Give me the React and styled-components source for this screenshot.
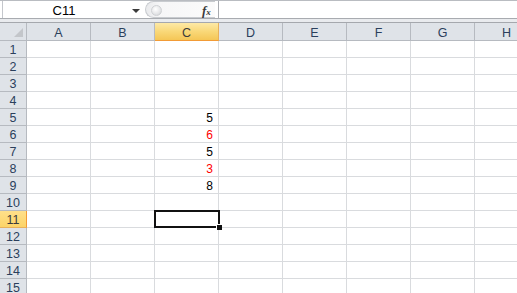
import React from "react";
import styled, { createGlobalStyle, css } from "styled-components";

const Global = createGlobalStyle`
  html, body { margin: 0; padding: 0; background: #ffffff; overflow: hidden; }
  body { font-family: "Liberation Sans", Arial, sans-serif; }
`;

const Window = styled.div`
  width: 517px;
  height: 293px;
  overflow: hidden;
  display: flex;
  flex-direction: column;
  background: #fff;
`;

const FormulaBar = styled.div`
  height: 19px;
  flex-shrink: 0;
  box-sizing: border-box;
  border-top: 1px solid #b9bcc1;
  border-bottom: 1px solid #a8abb0;
  display: flex;
  align-items: stretch;
  background: #fff;
`;

const NameBox = styled.div`
  margin-left: 2px;
  width: 141px;
  border-left: 1px solid #c4c7cc;
  display: flex;
  align-items: center;
  position: relative;
  font-size: 13px;
  color: #000;
`;

const NameText = styled.span`
  width: 122px;
  text-align: center;
  padding-top: 2px;
`;

const Arrow = styled.span`
  position: absolute;
  left: 129px;
  top: 8px;
  width: 0;
  height: 0;
  border-left: 4px solid transparent;
  border-right: 4px solid transparent;
  border-top: 4px solid #3b3b3b;
`;

const FxArea = styled.div`
  width: 74px;
  display: flex;
  align-items: center;
  position: relative;
`;

const Grip = styled.div`
  position: absolute;
  left: 1px;
  top: 0px;
  width: 70px;
  height: 17px;
  box-sizing: border-box;
  border-radius: 9px 0 0 9px;
  border: 1px solid #c8cbcf;
  border-right: none;
  background: linear-gradient(to right, #e9eaec 0%, #f6f6f7 20%, #fbfbfb 100%);
`;

const GripDot = styled.div`
  position: absolute;
  left: 5px;
  top: 3px;
  width: 9px;
  height: 9px;
  border-radius: 50%;
  background: radial-gradient(circle at 40% 35%, #ffffff 0%, #e4e5e7 60%, #c9cbce 100%);
  border: 1px solid #cfd1d4;
`;

const Fx = styled.span`
  position: absolute;
  left: 58px;
  top: 1px;
  font-family: "Liberation Serif", "Times New Roman", serif;
  font-style: italic;
  font-weight: bold;
  font-size: 13px;
  color: #3a3a3a;
  line-height: 17px;
`;

const FxSub = styled.span`
  font-size: 9px;
`;

const FormulaInput = styled.div`
  flex: 1;
  border-left: 1px solid #a8abb0;
`;

const Gap = styled.div`
  height: 3px;
  flex-shrink: 0;
  background: #e9ebee;
  border-bottom: 1px solid #a5a8ad;
`;

const Grid = styled.div`
  display: grid;
  grid-template-columns: 27px repeat(8, 64px);
  grid-template-rows: 18px;
  grid-auto-rows: 17px;
  position: relative;
`;

const headerBase = css`
  box-sizing: border-box;
  display: flex;
  align-items: center;
  justify-content: center;
  font-size: 12.5px;
  color: #2b3f5c;
  border-right: 1px solid #b6bac0;
  border-bottom: 1px solid #b6bac0;
  background: #dfe3e8;
  padding-top: 3px;
`;

const Corner = styled.div`
  ${headerBase};
  position: relative;
  &::after {
    content: "";
    position: absolute;
    right: 3px;
    bottom: 3px;
    width: 0;
    height: 0;
    border-left: 9px solid transparent;
    border-bottom: 9px solid #c3c6ca;
  }
`;

const ColHeader = styled.div`
  ${headerBase};
  ${(p) =>
    p.$active &&
    css`
      background: linear-gradient(to bottom, #fde9a6 0%, #f9d878 50%, #f5c656 100%);
      border-bottom: 1px solid #f29b36;
      border-right: 1px solid #e8b15b;
      color: #3b3b3b;
    `}
`;

const RowHeader = styled.div`
  ${headerBase};
  padding-top: 2px;
  ${(p) =>
    p.$active &&
    css`
      background: linear-gradient(to bottom, #ffe08a 0%, #fcd468 100%);
      border-right: 1px solid #f29b36;
      border-bottom: 1px solid #e8b15b;
      color: #3b3b3b;
    `}
`;

const Cell = styled.div`
  box-sizing: border-box;
  border-right: 1px solid #d9dbde;
  border-bottom: 1px solid #d9dbde;
  font-size: 12px;
  display: flex;
  align-items: flex-end;
  justify-content: flex-end;
  padding: 0 5px 0 0;
  line-height: 14px;
  color: ${(p) => (p.$red ? "#ff0000" : "#000")};
`;

const Selection = styled.div`
  position: absolute;
  left: 154px;
  top: 187px;
  width: 66px;
  height: 18px;
  box-sizing: border-box;
  border: 2px solid #111;
  pointer-events: none;
  &::after {
    content: "";
    position: absolute;
    right: -4px;
    bottom: -4px;
    width: 5px;
    height: 5px;
    background: #111;
    border-left: 1px solid #fff;
    border-top: 1px solid #fff;
  }
`;

const cols = ["A", "B", "C", "D", "E", "F", "G", "H"];
const values = { 5: ["5", false], 6: ["6", true], 7: ["5", false], 8: ["3", true], 9: ["8", false] };

export default function App() {
  const rows = Array.from({ length: 15 }, (_, i) => i + 1);
  return (
    <Window>
      <Global />
      <FormulaBar>
        <NameBox>
          <NameText>C11</NameText>
          <Arrow />
        </NameBox>
        <FxArea>
          <Grip>
            <GripDot />
          </Grip>
          <Fx>
            f<FxSub>x</FxSub>
          </Fx>
        </FxArea>
        <FormulaInput />
      </FormulaBar>
      <Gap />
      <Grid>
        <Corner />
        {cols.map((c) => (
          <ColHeader key={c} $active={c === "C"}>
            {c}
          </ColHeader>
        ))}
        {rows.map((r) => (
          <React.Fragment key={r}>
            <RowHeader $active={r === 11}>{r}</RowHeader>
            {cols.map((c) => {
              const v = c === "C" ? values[r] : null;
              return (
                <Cell key={c} $red={v ? v[1] : false}>
                  {v ? v[0] : ""}
                </Cell>
              );
            })}
          </React.Fragment>
        ))}
        <Selection />
      </Grid>
    </Window>
  );
}
